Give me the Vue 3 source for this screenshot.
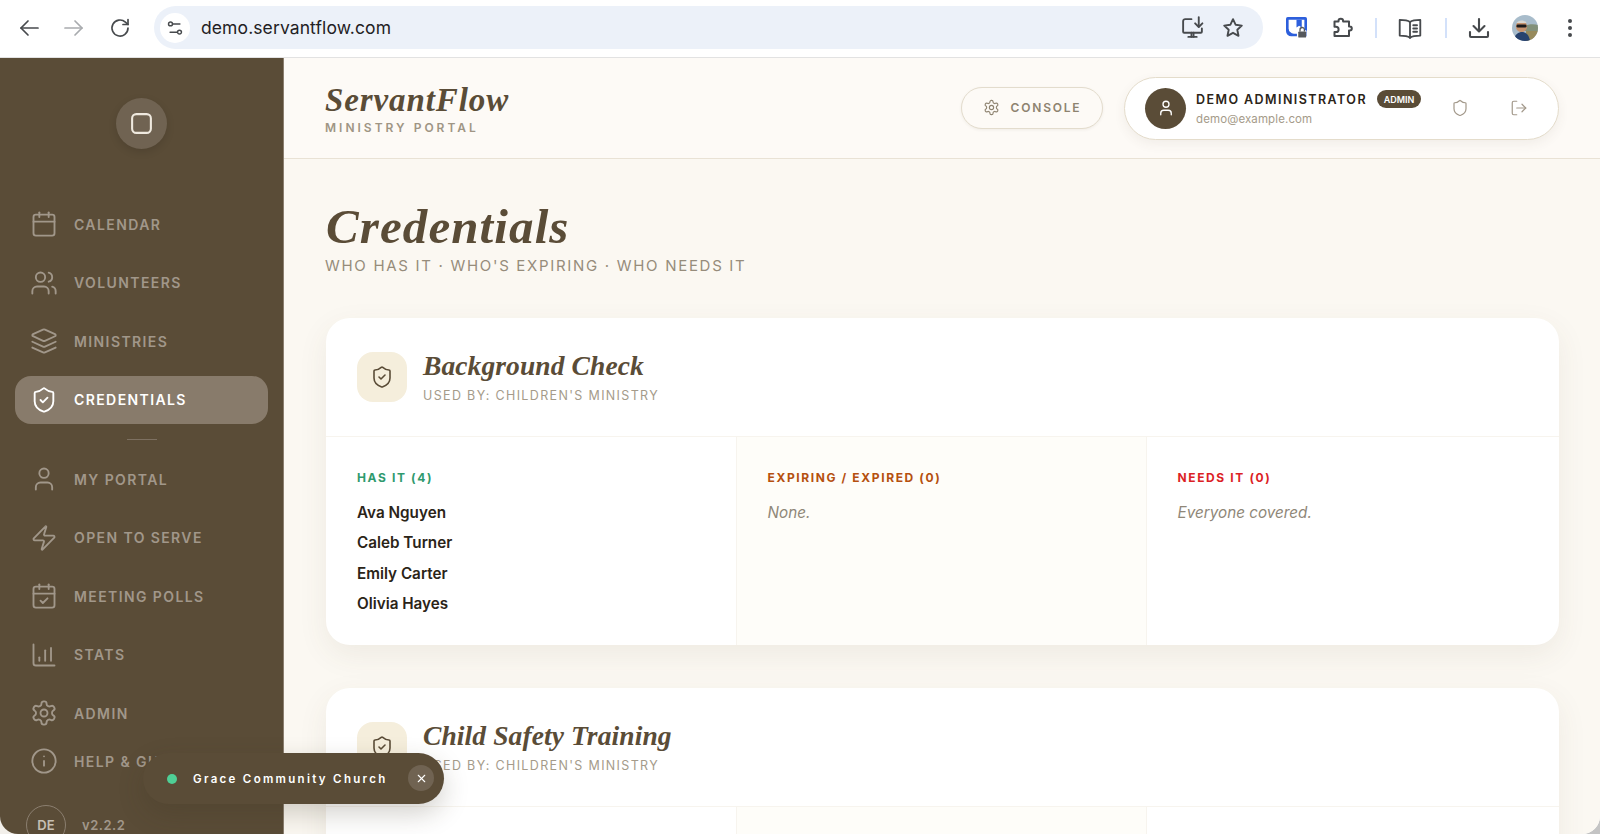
<script setup>
import { h } from 'vue'

const circle = (x, y, r) => `M${x - r} ${y}a${r} ${r} 0 1 0 ${2 * r} 0a${r} ${r} 0 1 0 ${-2 * r} 0`
const shield = 'M20 13c0 5-3.5 7.5-7.66 8.95a1 1 0 0 1-.67-.01C7.5 20.5 4 18 4 13V6a1 1 0 0 1 1-1c2 0 4.5-1.2 6.24-2.72a1.17 1.17 0 0 1 1.52 0C14.51 3.81 17 5 19 5a1 1 0 0 1 1 1z'
const calBase = ['M8 2v4', 'M16 2v4', 'M5 4h14a2 2 0 0 1 2 2v14a2 2 0 0 1-2 2H5a2 2 0 0 1-2-2V6a2 2 0 0 1 2-2z', 'M3 10h18']

const paths = {
  calendar: calBase,
  users: ['M16 21v-2a4 4 0 0 0-4-4H6a4 4 0 0 0-4 4v2', circle(9, 7, 4), 'M22 21v-2a4 4 0 0 0-3-3.87', 'M16 3.13a4 4 0 0 1 0 7.75'],
  layers: ['M12.83 2.18a2 2 0 0 0-1.66 0L2.6 6.08a1 1 0 0 0 0 1.83l8.58 3.91a2 2 0 0 0 1.66 0l8.58-3.9a1 1 0 0 0 0-1.83Z', 'M22 17.65l-9.17 4.16a2 2 0 0 1-1.66 0L2 17.65', 'M22 12.65l-9.17 4.16a2 2 0 0 1-1.66 0L2 12.65'],
  shieldCheck: [shield, 'm9 12 2 2 4-4'],
  user: ['M19 21v-2a4 4 0 0 0-4-4H9a4 4 0 0 0-4 4v2', circle(12, 7, 4)],
  zap: ['M4 14a1 1 0 0 1-.78-1.63l9.9-10.2a.5.5 0 0 1 .86.46l-1.92 6.02A1 1 0 0 0 13 10h7a1 1 0 0 1 .78 1.63l-9.9 10.2a.5.5 0 0 1-.86-.46l1.92-6.02A1 1 0 0 0 11 14z'],
  calendarCheck: [...calBase, 'm9 16 2 2 4-4'],
  chart: ['M3 3v16a2 2 0 0 0 2 2h16', 'M8 17v-3', 'M13 17V8', 'M18 17V6'],
  settings: ['M12.22 2h-.44a2 2 0 0 0-2 2v.18a2 2 0 0 1-1 1.73l-.43.25a2 2 0 0 1-2 0l-.15-.08a2 2 0 0 0-2.73.73l-.22.38a2 2 0 0 0 .73 2.73l.15.1a2 2 0 0 1 1 1.72v.51a2 2 0 0 1-1 1.74l-.15.09a2 2 0 0 0-.73 2.73l.22.38a2 2 0 0 0 2.73.73l.15-.08a2 2 0 0 1 2 0l.43.25a2 2 0 0 1 1 1.73V20a2 2 0 0 0 2 2h.44a2 2 0 0 0 2-2v-.18a2 2 0 0 1 1-1.73l.43-.25a2 2 0 0 1 2 0l.15.08a2 2 0 0 0 2.73-.73l.22-.39a2 2 0 0 0-.73-2.73l-.15-.08a2 2 0 0 1-1-1.74v-.5a2 2 0 0 1 1-1.74l.15-.09a2 2 0 0 0 .73-2.73l-.22-.38a2 2 0 0 0-2.73-.73l-.15.08a2 2 0 0 1-2 0l-.43-.25a2 2 0 0 1-1-1.73V4a2 2 0 0 0-2-2z', circle(12, 12, 3)],
  info: [circle(12, 12, 10), 'M12 16v-4', 'M12 8h.01'],
  shield: [shield],
  logout: ['M9 21H5a2 2 0 0 1-2-2V5a2 2 0 0 1 2-2h4', 'M16 17l5-5-5-5', 'M21 12H9'],
  square: ['M7 3h10a4 4 0 0 1 4 4v10a4 4 0 0 1-4 4H7a4 4 0 0 1-4-4V7a4 4 0 0 1 4-4z'],
  close: ['M18 6 6 18', 'M6 6l12 12'],
  back: ['M21 12H4', 'M11 5l-7 7 7 7'],
  forward: ['M3 12h17', 'M13 5l7 7-7 7'],
  reload: ['M20 12a8 8 0 1 1-2.6-5.9L20 8.5', 'M20 3.5v5h-5'],
  star: ['M12 3.2l2.7 5.6 6.1.8-4.5 4.2 1.2 6-5.5-3-5.5 3 1.2-6-4.5-4.2 6.1-.8z'],
  install: ['M11 4H5a2 2 0 0 0-2 2v10a1 1 0 0 0 1 1h16a1 1 0 0 0 1-1v-3', 'M8 21h8', 'M11 17v4', 'M13 21v-4', 'M18 2v9', 'M14.5 8l3.5 3.5L21.5 8'],
  puzzle: ['M4.5 5.5h4V5a2.3 2.3 0 0 1 4.6 0v.5H19v5h.8a2 2 0 0 1 0 4H19V20H4.5v-4H6a2.6 2.6 0 0 0 0-5.2H4.5z'],
  book: ['M12 6.5C10 5 7 4.5 2.5 4.5v14.5c4.5 0 7.5.5 9.5 2 2-1.5 5-2 9.5-2V4.5C17 4.5 14 5 12 6.5z', 'M12 6.5V21', 'M15 9.5h3.5', 'M15 12.5h3.5', 'M15 15.5h3.5'],
  download: ['M12 3v12', 'M6.5 10l5.5 5.5 5.5-5.5', 'M3 16v4a1 1 0 0 0 1 1h16a1 1 0 0 0 1-1v-4'],
  tune: ['M9.5 6.5h9', 'M5.5 17.5h9', circle(6, 6.5, 2.6), circle(18, 17.5, 2.6)],
}

const Icon = (props) =>
  h(
    'svg',
    {
      viewBox: '0 0 24 24',
      fill: 'none',
      stroke: 'currentColor',
      'stroke-width': props.sw || 1.6,
      'stroke-linecap': 'round',
      'stroke-linejoin': 'round',
    },
    paths[props.name].map((d) => h('path', { d })),
  )
Icon.props = ['name', 'sw']

const primaryNav = [
  { label: 'Calendar', icon: 'calendar' },
  { label: 'Volunteers', icon: 'users' },
  { label: 'Ministries', icon: 'layers' },
  { label: 'Credentials', icon: 'shieldCheck', active: true },
]
const secondaryNav = [
  { label: 'My Portal', icon: 'user' },
  { label: 'Open to Serve', icon: 'zap' },
  { label: 'Meeting Polls', icon: 'calendarCheck' },
  { label: 'Stats', icon: 'chart' },
  { label: 'Admin', icon: 'settings' },
]

const credentials = [
  { title: 'Background Check', used: "Used by: Children's Ministry", has: ['Ava Nguyen', 'Caleb Turner', 'Emily Carter', 'Olivia Hayes'] },
  { title: 'Child Safety Training', used: "Used by: Children's Ministry", has: [] },
]
</script>

<template>
  <div class="window">
    <div class="chrome">
      <Icon name="back" class="c-ico nav-first" :sw="1.7" />
      <Icon name="forward" class="c-ico nav-fwd" :sw="1.7" />
      <Icon name="reload" class="c-ico nav-re" :sw="1.7" />
      <div class="omnibox">
        <span class="site-btn"><Icon name="tune" class="tune" :sw="2" /></span>
        <span class="url">demo.servantflow.com</span>
        <Icon name="install" class="c-ico om-install" :sw="1.8" />
        <Icon name="star" class="c-ico om-star" :sw="1.9" />
      </div>
      <svg class="bw" viewBox="0 0 24 24">
        <path d="M2 0h20a2 2 0 0 1 2 2v20H6a6 6 0 0 1-6-6V2a2 2 0 0 1 2-2z" fill="#2d5fdc" />
        <path d="M3 3h18v16H9a6 6 0 0 1-6-6z" fill="#fff" />
        <path d="M12 3h6v9l-3-2-3 2z" fill="#2d5fdc" />
        <rect x="12.5" y="15" width="11" height="9" rx="1" fill="#fff" />
        <rect x="14" y="16.5" width="9" height="7" rx="1" fill="#55585c" />
        <path d="M16 16.5v-2a2.5 2.5 0 0 1 5 0v2" fill="none" stroke="#55585c" stroke-width="1.5" />
      </svg>
      <Icon name="puzzle" class="c-ico ext" :sw="2" />
      <span class="sep"></span>
      <Icon name="book" class="c-ico reader" :sw="1.7" />
      <span class="sep sep2"></span>
      <Icon name="download" class="c-ico dl" :sw="2.1" />
      <svg class="profile-pic" viewBox="0 0 26 26">
        <rect width="26" height="26" fill="#a8bccb" />
        <path d="M12 11c5-2 10-2 14-1v6H12z" fill="#83917a" />
        <path d="M14 16h12v10H14z" fill="#978a5c" />
        <path d="M2 26c0-7 5-9 8-9s7 2 8 9z" fill="#27426e" />
        <circle cx="9.5" cy="11.5" r="5.6" fill="#c7936f" />
        <rect x="4.5" y="9.5" width="10" height="3" rx="1.3" fill="#1a1a1c" />
        <path d="M4.5 8c1.5-3.5 8.5-3.5 10 0z" fill="#d8d6d0" />
      </svg>
      <span class="dots"><i></i><i></i><i></i></span>
    </div>

    <div class="app">
      <aside class="sidebar">
        <div class="logo"><Icon name="square" class="logo-ico" :sw="2" /></div>
        <nav class="nav">
          <a v-for="item in primaryNav" :key="item.label" class="item" :class="{ active: item.active }">
            <Icon :name="item.icon" class="item-ico" />
            <span>{{ item.label }}</span>
          </a>
          <div class="nav-rule"></div>
          <a v-for="item in secondaryNav" :key="item.label" class="item">
            <Icon :name="item.icon" class="item-ico" />
            <span>{{ item.label }}</span>
          </a>
          <a class="item help">
            <Icon name="info" class="item-ico" />
            <span>Help &amp; Guide</span>
          </a>
        </nav>
        <div class="foot">
          <span class="de">DE</span>
          <span class="ver">v2.2.2</span>
        </div>
      </aside>

      <div class="main">
        <header class="topbar">
          <div class="brand">
            <div class="brand-name">ServantFlow</div>
            <div class="brand-sub">Ministry Portal</div>
          </div>
          <button class="console"><Icon name="settings" class="console-ico" />Console</button>
          <div class="profile">
            <span class="avatar"><Icon name="user" class="avatar-ico" :sw="1.8" /></span>
            <div class="who">
              <div class="who-top"><span class="who-name">Demo Administrator</span><span class="badge">ADMIN</span></div>
              <div class="who-mail">demo@example.com</div>
            </div>
            <Icon name="shield" class="pro-ico pro-shield" />
            <Icon name="logout" class="pro-ico pro-out" />
          </div>
        </header>

        <main class="content">
          <h1 class="title">Credentials</h1>
          <p class="subtitle">Who has it · Who's expiring · Who needs it</p>

          <section v-for="c in credentials" :key="c.title" class="card">
            <div class="card-head">
              <span class="card-ico"><Icon name="shieldCheck" class="card-svg" /></span>
              <div>
                <h2 class="card-title">{{ c.title }}</h2>
                <div class="card-used">{{ c.used }}</div>
              </div>
            </div>
            <div class="cols">
              <div class="col">
                <div class="col-label green">Has it ({{ c.has.length }})</div>
                <div v-for="n in c.has" :key="n" class="person">{{ n }}</div>
              </div>
              <div class="col warm">
                <div class="col-label amber">Expiring / Expired (0)</div>
                <div class="empty">None.</div>
              </div>
              <div class="col">
                <div class="col-label red">Needs it (0)</div>
                <div class="empty">Everyone covered.</div>
              </div>
            </div>
          </section>
        </main>
      </div>

      <div class="toast">
        <span class="dot"></span>
        <span class="toast-text">Grace Community Church</span>
        <span class="toast-x"><Icon name="close" class="x-ico" :sw="2" /></span>
      </div>
    </div>
  </div>
</template>

<style>
html, body { margin: 0; background: linear-gradient(90deg, #f2efea 50%, #c4c4c4 50%); }
</style>

<style scoped>
* { box-sizing: border-box; }
.window {
  width: 1600px;
  height: 834px;
  overflow: hidden;
  display: flex;
  flex-direction: column;
  font-family: Inter, "Liberation Sans", sans-serif;
  border-radius: 0 0 18px 18px;
  background: #fff;
}

/* browser chrome */
.chrome {
  height: 58px;
  flex: none;
  display: flex;
  align-items: center;
  background: #fff;
  border-bottom: 1px solid #e2e2e2;
  padding: 0 0 2px 17px;
  color: #474a4d;
  position: relative;
}
.c-ico { width: 24px; height: 24px; flex: none; }
.nav-fwd { margin-left: 21px; color: #a9abae; }
.nav-re { margin-left: 22px; }
.omnibox {
  width: 1109px;
  height: 43px;
  margin-left: 22px;
  border-radius: 22px;
  background: #ecf1f9;
  display: flex;
  align-items: center;
  padding-left: 6px;
}
.site-btn {
  width: 30px;
  height: 30px;
  border-radius: 50%;
  background: #fff;
  display: flex;
  align-items: center;
  justify-content: center;
}
.tune { width: 18px; height: 18px; }
.url { margin-left: 11px; font-size: 17.5px; color: #1f2124; letter-spacing: 0.1px; }
.om-install { margin-left: auto; width: 25px; height: 25px; }
.om-star { margin-left: 16px; margin-right: 18px; }
.bw { width: 21px; height: 21px; margin-left: 23px; flex: none; }
.ext { margin-left: 23px; }
.sep { width: 2px; height: 20px; background: #d3e1fa; margin-left: 21px; flex: none; }
.reader { margin-left: 20px; width: 26px; height: 26px; }
.sep2 { margin-left: 22px; }
.dl { margin-left: 20px; }
.profile-pic { width: 26px; height: 26px; border-radius: 50%; margin-left: 21px; flex: none; }
.dots { display: flex; flex-direction: column; gap: 3px; margin-left: 30px; }
.dots i { display: block; width: 4px; height: 4px; border-radius: 50%; background: #474a4d; }

/* app frame */
.app { flex: 1; min-height: 0; display: flex; position: relative; }
.sidebar {
  width: 284px;
  flex: none;
  background: #5a4c37;
  border-right: 1px solid #8b7f70;
  display: flex;
  flex-direction: column;
  overflow: hidden;
  padding: 40px 15px 0;
}
.logo {
  width: 51px;
  height: 51px;
  border-radius: 50%;
  background: #706352;
  box-shadow: 0 3px 8px rgba(0, 0, 0, 0.12);
  display: flex;
  align-items: center;
  justify-content: center;
  align-self: center;
  flex: none;
}
.logo-ico { width: 25px; height: 25px; color: #efe9df; }
.nav { margin-top: 51px; display: flex; flex-direction: column; flex: none; }
.item {
  height: 48px;
  flex: none;
  display: flex;
  align-items: center;
  gap: 16px;
  padding-left: 15px;
  margin-bottom: 10.5px;
  border-radius: 16px;
  width: 253px;
  color: #a1978a;
  font-size: 14px;
  font-weight: 600;
  letter-spacing: 0.1em;
  text-transform: uppercase;
  white-space: nowrap;
}
.item:nth-last-child(2) { margin-bottom: 0; }
.item.active { background: #887b6b; color: #fff; }
.item-ico { width: 28px; height: 28px; flex: none; }
.nav-rule { width: 30px; height: 1px; background: #7d7061; margin: 5px auto 15px; flex: none; }
.foot { display: flex; align-items: center; margin: 9px 0 0 11px; gap: 16px; flex: none; }
.de {
  width: 40px;
  height: 40px;
  border-radius: 50%;
  border: 1px solid #8b7f70;
  display: flex;
  align-items: center;
  justify-content: center;
  color: #c6bfb3;
  font-size: 13px;
  font-weight: 600;
  flex: none;
}
.ver { color: #a1978a; font-size: 13px; font-weight: 600; letter-spacing: 0.04em; }

/* main */
.main { flex: 1; min-width: 0; display: flex; flex-direction: column; background: #fbf8f2; }
.topbar {
  height: 101px;
  flex: none;
  background: #fdfaf6;
  border-bottom: 1px solid #e9e2d5;
  display: flex;
  align-items: center;
  padding: 0 41px 0 41px;
}
.brand { margin-right: auto; }
.brand-name {
  font-family: "Liberation Serif", serif;
  font-style: italic;
  font-weight: 700;
  font-size: 33px;
  line-height: 38px;
  color: #5a4c37;
  letter-spacing: 0.9px;
}
.brand-sub {
  font-size: 12px;
  line-height: 15px;
  font-weight: 600;
  letter-spacing: 0.25em;
  text-transform: uppercase;
  color: #9f9584;
  margin-top: 1px;
}
.console {
  height: 42px;
  width: 142px;
  border-radius: 21px;
  border: 1px solid #e3dccd;
  background: #fdfaf6;
  box-shadow: 0 1px 3px rgba(90, 74, 53, 0.08);
  color: #8e8370;
  display: flex;
  align-items: center;
  justify-content: center;
  gap: 11px;
  font-family: inherit;
  font-size: 12px;
  font-weight: 600;
  letter-spacing: 0.15em;
  text-transform: uppercase;
  margin-right: 21px;
  padding-bottom: 2px;
}
.console-ico { width: 17px; height: 17px; }
.profile {
  width: 435px;
  height: 63px;
  border-radius: 32px;
  background: #fff;
  border: 1px solid #e4dccb;
  box-shadow: 0 4px 12px rgba(90, 74, 53, 0.07);
  display: flex;
  align-items: center;
  padding-left: 20px;
}
.avatar {
  width: 41px;
  height: 41px;
  border-radius: 50%;
  background: #5a4c37;
  display: flex;
  align-items: center;
  justify-content: center;
  color: #fff;
  flex: none;
}
.avatar-ico { width: 18px; height: 18px; }
.who { margin-left: 10px; width: 230px; flex: none; }
.who-top { display: flex; align-items: center; gap: 10px; }
.who-name {
  font-size: 12.5px;
  font-weight: 600;
  letter-spacing: 0.115em;
  text-transform: uppercase;
  color: #2b2418;
}
.badge {
  background: #5a4c37;
  color: #fff;
  font-size: 9px;
  font-weight: 600;
  height: 18px;
  width: 44px;
  border-radius: 9px;
  display: flex;
  align-items: center;
  justify-content: center;
}
.who-mail { font-size: 11.5px; line-height: 14px; color: #a59b8a; margin-top: 4px; letter-spacing: 0.01em; }
.pro-ico { width: 18px; height: 18px; color: #a2988a; flex: none; }
.pro-shield { margin-left: 25px; }
.pro-out { margin-left: 41px; }

.content { flex: 1; min-height: 0; overflow: hidden; padding: 39px 41px 0 42px; }
.title {
  margin: 0;
  font-family: "Liberation Serif", serif;
  font-style: italic;
  font-weight: 700;
  font-size: 49px;
  line-height: 57px;
  color: #5a4c37;
  letter-spacing: 1.1px;
}
.subtitle {
  margin: 0;
  font-size: 15px;
  line-height: 22px;
  letter-spacing: 0.113em;
  text-transform: uppercase;
  color: #968c7b;
  margin-left: -1px;
}
.card {
  margin-top: 43px;
  background: #fff;
  border-radius: 24px;
  box-shadow: 0 10px 30px rgba(90, 74, 53, 0.08);
  overflow: hidden;
}
.subtitle + .card { margin-top: 41px; }
.card-head {
  height: 119px;
  display: flex;
  align-items: center;
  gap: 16px;
  padding-left: 31px;
  border-bottom: 1px solid #f7f4ee;
}
.card-ico {
  width: 50px;
  height: 50px;
  border-radius: 16px;
  background: #f5eedc;
  display: flex;
  align-items: center;
  justify-content: center;
  color: #5a4c37;
  flex: none;
}
.card-svg { width: 24px; height: 24px; }
.card-title {
  margin: 0;
  font-family: "Liberation Serif", serif;
  font-style: italic;
  font-weight: 700;
  font-size: 27.5px;
  line-height: 32px;
  color: #5a4c37;
  letter-spacing: 0.1px;
}
.card-used {
  font-size: 12.5px;
  line-height: 16px;
  letter-spacing: 0.108em;
  text-transform: uppercase;
  color: #a59b8a;
  margin-top: 6px;
}
.cols { display: grid; grid-template-columns: 410px 410px 1fr; height: 208px; }
.col { padding: 33px 31px 0 30.5px; border-left: 1px solid #f7f4ee; }
.col:first-child { border-left: 0; padding-left: 31px; }
.warm { background: #fefdf9; }
.col-label {
  font-size: 12px;
  line-height: 16px;
  font-weight: 700;
  letter-spacing: 0.135em;
  text-transform: uppercase;
  margin-bottom: 12px;
}
.green { color: #2f9a6e; }
.amber { color: #b5500f; }
.red { color: #dc1f26; }
.person { font-size: 15.25px; line-height: 30.3px; font-weight: 600; color: #2b2418; }
.empty { font-size: 15.25px; line-height: 30.3px; font-style: italic; color: #8f8778; }

/* floating tenant pill */
.toast {
  position: absolute;
  left: 143px;
  top: 695px;
  width: 301px;
  height: 51px;
  border-radius: 26px;
  background: #5a4c37;
  box-shadow: 0 10px 26px rgba(60, 48, 32, 0.22);
  display: flex;
  align-items: center;
  padding-left: 24px;
  color: #fff;
}
.dot { width: 10px; height: 10px; border-radius: 50%; background: #4fcf96; flex: none; }
.toast-text { margin-left: 16px; font-size: 11.5px; font-weight: 600; letter-spacing: 0.2em; white-space: nowrap; }
.toast-x {
  position: absolute;
  right: 10px;
  top: 12px;
  width: 26px;
  height: 26px;
  border-radius: 50%;
  background: #706352;
  display: flex;
  align-items: center;
  justify-content: center;
}
.x-ico { width: 13px; height: 13px; }
</style>
